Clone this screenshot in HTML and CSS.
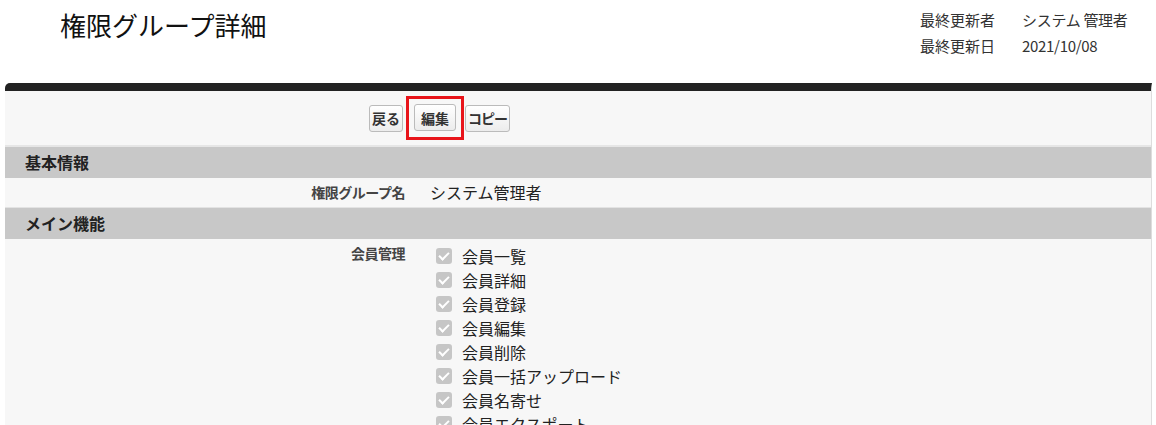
FILE: index.html
```html
<!DOCTYPE html>
<html lang="ja">
<head>
    <meta charset="UTF-8">
    <title>権限グループ詳細</title>
    <link rel="stylesheet" href="styles.css">
</head>
<body>

    <div class="page-head">
        <h1 class="page-title">権限グループ詳細</h1>
        <dl class="meta">
            <div class="meta-row"><dt>最終更新者</dt><dd>システム 管理者</dd></div>
            <div class="meta-row"><dt>最終更新日</dt><dd>2021/10/08</dd></div>
        </dl>
    </div>

    <div class="panel">
        <div class="btn-row">
            <button class="btn">戻る</button>
            <span class="mark"><button class="btn wide">編集</button></span>
            <button class="btn tight">コピー</button>
        </div>

        <div class="section-title">基本情報</div>
        <div class="row">
            <div class="label">権限グループ名</div>
            <div class="value">システム管理者</div>
        </div>

        <div class="section-title">メイン機能</div>
        <div class="row">
            <div class="label top">会員管理</div>
            <ul class="checks">
                <li><span class="box"></span>会員一覧</li>
                <li><span class="box"></span>会員詳細</li>
                <li><span class="box"></span>会員登録</li>
                <li><span class="box"></span>会員編集</li>
                <li><span class="box"></span>会員削除</li>
                <li><span class="box"></span>会員一括アップロード</li>
                <li><span class="box"></span>会員名寄せ</li>
                <li><span class="box"></span>会員エクスポート</li>
            </ul>
        </div>
    </div>

</body>
</html>
```

FILE: styles.css
```css
body {
    margin: 0;
    padding: 0;
    background-color: #fff;
    color: #222;
    font-family: "Noto Sans CJK JP", "Noto Sans", sans-serif;
}

.page-head {
    display: flex;
    justify-content: space-between;
    height: 83px;
}

.page-title {
    margin: 0;
    padding: 7px 0 0 60px;
    font-size: 26px;
    font-weight: normal;
    line-height: 36px;
    color: #111;
}

.meta {
    margin: 0;
    padding: 7px 24px 0 0;
    font-size: 15px;
    line-height: 26px;
    color: #333;
}

.meta-row {
    display: flex;
}

.meta dt {
    flex: none;
    width: 102px;
}

.meta dd {
    margin: 0;
    width: 110px;
    white-space: nowrap;
    letter-spacing: -0.3px;
}

.panel {
    margin: 0 4px 0 5px;
    background-color: #f7f7f7;
    border-top: 8px solid #222;
    border-right: 1px solid #ddd;
    border-top-left-radius: 5px;
    height: 400px;
}

.btn-row {
    display: flex;
    align-items: center;
    height: 54px;
    padding-left: 364px;
    border-bottom: 2px solid #e6e6e6;
}

.btn {
    font-family: inherit;
    font-size: 14px;
    font-weight: bold;
    color: #333;
    height: 27px;
    padding: 0 2px;
    background: linear-gradient(#fff, #ececec);
    border: 1px solid #bbb;
    border-radius: 3px;
}

.btn.wide {
    padding: 0 6px;
}

.btn.tight {
    letter-spacing: -1px;
}

.mark {
    display: flex;
    margin: 0 1px 0 3px;
    padding: 5px 5px 6px 5px;
    border: 3px solid #e8141a;
}

.section-title {
    height: 31px;
    line-height: 31px;
    padding-left: 20px;
    background-color: #c8c8c8;
    font-size: 16px;
    font-weight: bold;
    color: #222;
}

.row {
    display: flex;
    border-bottom: 1px solid #e3e3e3;
}

.label {
    width: 400px;
    text-align: right;
    font-size: 14px;
    font-weight: bold;
    color: #444;
    line-height: 29px;
    letter-spacing: -0.5px;
}

.label.top {
    padding-top: 2px;
    line-height: 24px;
}

.value {
    padding-left: 25px;
    font-size: 16px;
    line-height: 29px;
    color: #222;
}

.checks {
    list-style: none;
    margin: 0;
    padding: 5px 0 0 31px;
}

.checks li {
    display: flex;
    align-items: center;
    height: 24px;
    font-size: 16px;
    color: #222;
}

.box {
    width: 16px;
    height: 16px;
    margin-right: 10px;
    border-radius: 3px;
    background-color: #c6c6c6;
    position: relative;
}

.box::after {
    content: "";
    position: absolute;
    left: 5px;
    top: 2px;
    width: 4px;
    height: 8px;
    border: solid #fff;
    border-width: 0 2px 2px 0;
    transform: rotate(45deg);
}
```
